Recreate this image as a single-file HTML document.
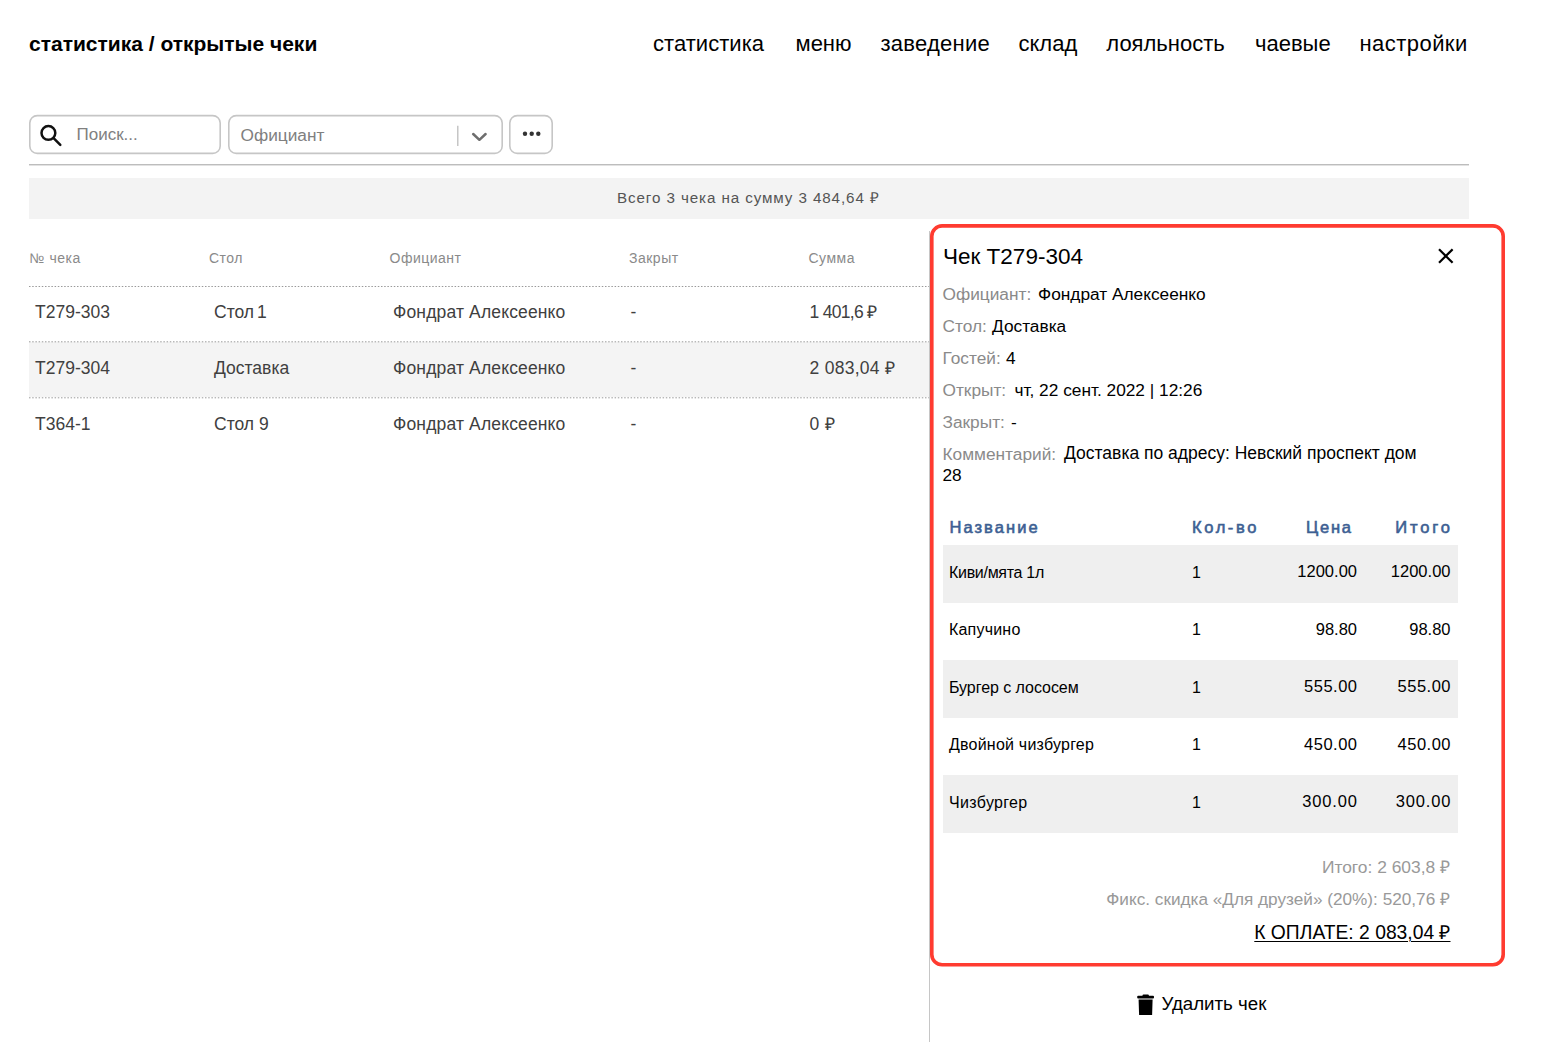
<!DOCTYPE html>
<html><head><meta charset="utf-8"><title>открытые чеки</title>
<style>
html,body{margin:0;padding:0;background:#fff;}
body{width:1564px;height:1042px;position:relative;overflow:hidden;font-family:"Liberation Sans",sans-serif;}
.t{position:absolute;white-space:nowrap;}
.b{position:absolute;}
</style></head><body>
<div class="t" style="top:31.32px;font-size:21px;line-height:25.2px;color:#000;font-weight:700;left:29px;">статистика / открытые чеки</div>
<div class="t" style="top:31.18px;font-size:22px;line-height:26.4px;color:#000;letter-spacing:0.05px;left:653px;">статистика</div>
<div class="t" style="top:31.18px;font-size:22px;line-height:26.4px;color:#000;left:795.5px;">меню</div>
<div class="t" style="top:31.18px;font-size:22px;line-height:26.4px;color:#000;letter-spacing:0.25px;left:880.5px;">заведение</div>
<div class="t" style="top:31.18px;font-size:22px;line-height:26.4px;color:#000;left:1018.5px;">склад</div>
<div class="t" style="top:31.18px;font-size:22px;line-height:26.4px;color:#000;left:1106.3px;">лояльность</div>
<div class="t" style="top:31.18px;font-size:22px;line-height:26.4px;color:#000;left:1255px;">чаевые</div>
<div class="t" style="top:31.18px;font-size:22px;line-height:26.4px;color:#000;letter-spacing:0.45px;left:1359.5px;">настройки</div>
<svg class="b" style="left:0;top:0" width="600" height="180"><rect x="29.8" y="115.6" width="190.4" height="37.8" rx="7.5" fill="none" stroke="#c6c6c6" stroke-width="1.6"/><rect x="228.8" y="115.6" width="273.4" height="37.8" rx="7.5" fill="none" stroke="#c6c6c6" stroke-width="1.6"/><rect x="509.8" y="115.6" width="42.4" height="37.8" rx="7.5" fill="none" stroke="#c6c6c6" stroke-width="1.6"/></svg>
<svg class="b" style="left:0;top:0" width="600" height="180">
<circle cx="48.4" cy="132.9" r="6.9" fill="none" stroke="#111" stroke-width="2.5"/>
<line x1="53.6" y1="138.1" x2="60.3" y2="144.8" stroke="#111" stroke-width="2.5" stroke-linecap="round"/>
<line x1="457.8" y1="125.7" x2="457.8" y2="146" stroke="#bdbdbd" stroke-width="1.3"/>
<polyline points="473.2,134 479.4,139.8 485.6,134" fill="none" stroke="#6e6e6e" stroke-width="2.5" stroke-linecap="round" stroke-linejoin="round"/>
<circle cx="525" cy="133.8" r="2.2" fill="#333"/><circle cx="531.7" cy="133.8" r="2.2" fill="#333"/><circle cx="538.3" cy="133.8" r="2.2" fill="#333"/>
</svg>
<div class="t" style="top:125.21px;font-size:17px;line-height:20.4px;color:#808080;left:76.5px;">Поиск...</div>
<div class="t" style="top:124.93px;font-size:17.3px;line-height:20.76px;color:#808080;left:240.5px;">Официант</div>
<div class="b" style="left:29px;top:164px;width:1440px;height:1px;background:#bdbdbd;"></div>
<div class="b" style="left:29px;top:165px;width:1440px;height:1px;background:#e2e2e2;"></div>
<div class="b" style="left:29px;top:178px;width:1440px;height:41px;background:#f3f3f3;"></div>
<div class="t" style="top:189.01px;font-size:15.2px;line-height:18.24px;color:#555;letter-spacing:0.9px;left:617px;">Всего 3 чека на сумму 3 484,64 ₽</div>
<div class="t" style="top:250.05px;font-size:14px;line-height:16.8px;color:#8a8a8a;letter-spacing:0.5px;left:29.5px;">№ чека</div>
<div class="t" style="top:250.05px;font-size:14px;line-height:16.8px;color:#8a8a8a;letter-spacing:0.5px;left:209px;">Стол</div>
<div class="t" style="top:250.05px;font-size:14px;line-height:16.8px;color:#8a8a8a;letter-spacing:0.5px;left:389.5px;">Официант</div>
<div class="t" style="top:250.05px;font-size:14px;line-height:16.8px;color:#8a8a8a;letter-spacing:0.5px;left:629px;">Закрыт</div>
<div class="t" style="top:250.05px;font-size:14px;line-height:16.8px;color:#8a8a8a;letter-spacing:0.5px;left:808.5px;">Сумма</div>
<div class="b" style="left:29px;top:342px;width:900px;height:55px;background:#f4f4f4;"></div>
<svg class="b" style="left:0;top:0" width="940" height="420"><line x1="29" y1="286.5" x2="929" y2="286.5" stroke="#9a9a9a" stroke-width="1" stroke-dasharray="1.5 1.7"/><line x1="29" y1="341.8" x2="929" y2="341.8" stroke="#9a9a9a" stroke-width="1" stroke-dasharray="1.5 1.7"/><line x1="29" y1="397.8" x2="929" y2="397.8" stroke="#9a9a9a" stroke-width="1" stroke-dasharray="1.5 1.7"/></svg>
<div class="t" style="top:301.64px;font-size:17.5px;line-height:21.0px;color:#404040;left:35px;">T279-303</div>
<div class="t" style="top:301.64px;font-size:17.5px;line-height:21.0px;color:#404040;left:214px;word-spacing:-2px;">Стол 1</div>
<div class="t" style="top:301.64px;font-size:17.5px;line-height:21.0px;color:#404040;letter-spacing:0.15px;left:393px;">Фондрат Алексеенко</div>
<div class="t" style="top:301.64px;font-size:17.5px;line-height:21.0px;color:#404040;left:630.5px;">-</div>
<div class="t" style="top:301.64px;font-size:17.5px;line-height:21.0px;color:#404040;letter-spacing:-0.7px;left:809.5px;">1 401,6 ₽</div>
<div class="t" style="top:358.04px;font-size:17.5px;line-height:21.0px;color:#404040;left:35px;">T279-304</div>
<div class="t" style="top:358.04px;font-size:17.5px;line-height:21.0px;color:#404040;left:214px;">Доставка</div>
<div class="t" style="top:358.04px;font-size:17.5px;line-height:21.0px;color:#404040;letter-spacing:0.15px;left:393px;">Фондрат Алексеенко</div>
<div class="t" style="top:358.04px;font-size:17.5px;line-height:21.0px;color:#404040;left:630.5px;">-</div>
<div class="t" style="top:358.04px;font-size:17.5px;line-height:21.0px;color:#404040;letter-spacing:0.28px;left:809.5px;">2 083,04 ₽</div>
<div class="t" style="top:414.04px;font-size:17.5px;line-height:21.0px;color:#404040;left:35px;">T364-1</div>
<div class="t" style="top:414.04px;font-size:17.5px;line-height:21.0px;color:#404040;left:214px;">Стол 9</div>
<div class="t" style="top:414.04px;font-size:17.5px;line-height:21.0px;color:#404040;letter-spacing:0.15px;left:393px;">Фондрат Алексеенко</div>
<div class="t" style="top:414.04px;font-size:17.5px;line-height:21.0px;color:#404040;left:630.5px;">-</div>
<div class="t" style="top:414.04px;font-size:17.5px;line-height:21.0px;color:#404040;letter-spacing:0.5px;left:809.5px;">0 ₽</div>
<div class="b" style="left:929px;top:231px;width:1px;height:811px;background:#c6c6c6;"></div>
<svg class="b" style="left:920px;top:214px" width="600" height="770"><rect x="11.8" y="11.9" width="571.4" height="738.8" rx="10.3" fill="none" stroke="#ff3b30" stroke-width="3.6"/></svg>
<div class="t" style="top:243.10px;font-size:22.5px;line-height:27.0px;color:#000;left:943px;">Чек T279-304</div>
<svg class="b" style="left:1430px;top:240px" width="32" height="32">
<line x1="9.8" y1="10.1" x2="21.8" y2="21.9" stroke="#000" stroke-width="2.2" stroke-linecap="square"/>
<line x1="21.8" y1="10.1" x2="9.8" y2="21.9" stroke="#000" stroke-width="2.2" stroke-linecap="square"/>
</svg>
<div class="t" style="top:283.63px;font-size:17.3px;line-height:20.76px;color:#8a8a8a;left:942.5px;">Официант:</div>
<div class="t" style="top:283.63px;font-size:17.3px;line-height:20.76px;color:#000;left:1038px;">Фондрат Алексеенко</div>
<div class="t" style="top:315.63px;font-size:17.3px;line-height:20.76px;color:#8a8a8a;left:942.5px;">Стол:</div>
<div class="t" style="top:315.63px;font-size:17.3px;line-height:20.76px;color:#000;left:992px;">Доставка</div>
<div class="t" style="top:347.63px;font-size:17.3px;line-height:20.76px;color:#8a8a8a;left:942.5px;">Гостей:</div>
<div class="t" style="top:347.63px;font-size:17.3px;line-height:20.76px;color:#000;left:1006px;">4</div>
<div class="t" style="top:379.63px;font-size:17.3px;line-height:20.76px;color:#8a8a8a;left:942.5px;">Открыт:</div>
<div class="t" style="top:379.63px;font-size:17.3px;line-height:20.76px;color:#000;left:1014.5px;">чт, 22 сент. 2022 | 12:26</div>
<div class="t" style="top:411.63px;font-size:17.3px;line-height:20.76px;color:#8a8a8a;left:942.5px;">Закрыт:</div>
<div class="t" style="top:411.63px;font-size:17.3px;line-height:20.76px;color:#000;left:1011px;">-</div>
<div class="t" style="top:443.63px;font-size:17.3px;line-height:20.76px;color:#8a8a8a;left:942.5px;">Комментарий:</div>
<div class="t" style="top:443.44px;font-size:17.5px;line-height:21.0px;color:#000;left:1064px;">Доставка по адресу: Невский проспект дом</div>
<div class="t" style="top:465.23px;font-size:17.3px;line-height:20.76px;color:#000;left:942.5px;">28</div>
<div class="t" style="top:517.98px;font-size:16.5px;line-height:19.8px;color:#3d5f93;letter-spacing:2.05px;left:949.5px;-webkit-text-stroke:0.6px #3d5f93;">Название</div>
<div class="t" style="top:517.98px;font-size:16.5px;line-height:19.8px;color:#3d5f93;letter-spacing:2.6px;left:1192px;-webkit-text-stroke:0.6px #3d5f93;">Кол-во</div>
<div class="t" style="top:517.98px;font-size:16.5px;line-height:19.8px;color:#3d5f93;letter-spacing:1.75px;right:213px;margin-right:-1.75px;-webkit-text-stroke:0.6px #3d5f93;">Цена</div>
<div class="t" style="top:517.98px;font-size:16.5px;line-height:19.8px;color:#3d5f93;letter-spacing:2.9px;right:114px;margin-right:-2.9px;-webkit-text-stroke:0.6px #3d5f93;">Итого</div>
<div class="b" style="left:943px;top:545.0px;width:515px;height:57.5px;background:#efefef;"></div>
<div class="t" style="top:562.56px;font-size:16px;line-height:19.2px;color:#000;letter-spacing:-0.3px;left:949px;">Киви/мята 1л</div>
<div class="t" style="top:562.56px;font-size:16px;line-height:19.2px;color:#000;left:1192px;">1</div>
<div class="t" style="top:562.08px;font-size:16.5px;line-height:19.8px;color:#000;right:207px;">1200.00</div>
<div class="t" style="top:562.08px;font-size:16.5px;line-height:19.8px;color:#000;right:113.5px;">1200.00</div>
<div class="t" style="top:620.06px;font-size:16px;line-height:19.2px;color:#000;letter-spacing:0.2px;left:949px;">Капучино</div>
<div class="t" style="top:620.06px;font-size:16px;line-height:19.2px;color:#000;left:1192px;">1</div>
<div class="t" style="top:619.58px;font-size:16.5px;line-height:19.8px;color:#000;right:207px;">98.80</div>
<div class="t" style="top:619.58px;font-size:16.5px;line-height:19.8px;color:#000;right:113.5px;">98.80</div>
<div class="b" style="left:943px;top:660.0px;width:515px;height:57.5px;background:#efefef;"></div>
<div class="t" style="top:677.56px;font-size:16px;line-height:19.2px;color:#000;letter-spacing:-0.05px;left:949px;">Бургер с лососем</div>
<div class="t" style="top:677.56px;font-size:16px;line-height:19.2px;color:#000;left:1192px;">1</div>
<div class="t" style="top:677.08px;font-size:16.5px;line-height:19.8px;color:#000;letter-spacing:0.5px;right:207px;margin-right:-0.5px;">555.00</div>
<div class="t" style="top:677.08px;font-size:16.5px;line-height:19.8px;color:#000;letter-spacing:0.5px;right:113.5px;margin-right:-0.5px;">555.00</div>
<div class="t" style="top:735.06px;font-size:16px;line-height:19.2px;color:#000;letter-spacing:0.22px;left:949px;">Двойной чизбургер</div>
<div class="t" style="top:735.06px;font-size:16px;line-height:19.2px;color:#000;left:1192px;">1</div>
<div class="t" style="top:734.58px;font-size:16.5px;line-height:19.8px;color:#000;letter-spacing:0.5px;right:207px;margin-right:-0.5px;">450.00</div>
<div class="t" style="top:734.58px;font-size:16.5px;line-height:19.8px;color:#000;letter-spacing:0.5px;right:113.5px;margin-right:-0.5px;">450.00</div>
<div class="b" style="left:943px;top:775.0px;width:515px;height:57.5px;background:#efefef;"></div>
<div class="t" style="top:792.56px;font-size:16px;line-height:19.2px;color:#000;letter-spacing:0.33px;left:949px;">Чизбургер</div>
<div class="t" style="top:792.56px;font-size:16px;line-height:19.2px;color:#000;left:1192px;">1</div>
<div class="t" style="top:792.08px;font-size:16.5px;line-height:19.8px;color:#000;letter-spacing:0.85px;right:207px;margin-right:-0.85px;">300.00</div>
<div class="t" style="top:792.08px;font-size:16.5px;line-height:19.8px;color:#000;letter-spacing:0.85px;right:113.5px;margin-right:-0.85px;">300.00</div>
<div class="t" style="top:857.03px;font-size:17.4px;line-height:20.88px;color:#999;right:114px;">Итого: 2 603,8 ₽</div>
<div class="t" style="top:888.82px;font-size:17.2px;line-height:20.64px;color:#999;right:114px;">Фикс. скидка «Для друзей» (20%): 520,76 ₽</div>
<div class="t" style="top:920.73px;font-size:19.3px;line-height:23.16px;color:#000;right:113.5px;text-decoration:underline;text-underline-offset:2px;text-decoration-thickness:1px;">К ОПЛАТЕ: 2 083,04 ₽</div>
<svg class="b" style="left:1130px;top:985px" width="32" height="40">
<polygon points="8.6,14.6 22.6,14.6 22.1,30 9.1,30" fill="#000"/>
<rect x="7.2" y="10.8" width="16.8" height="2.6" rx="1" fill="#000"/>
<rect x="12.5" y="9.6" width="6.4" height="2.2" rx="1" fill="#000"/>
</svg>
<div class="t" style="top:992.60px;font-size:18.7px;line-height:22.44px;color:#000;left:1161.5px;">Удалить чек</div>
</body></html>
